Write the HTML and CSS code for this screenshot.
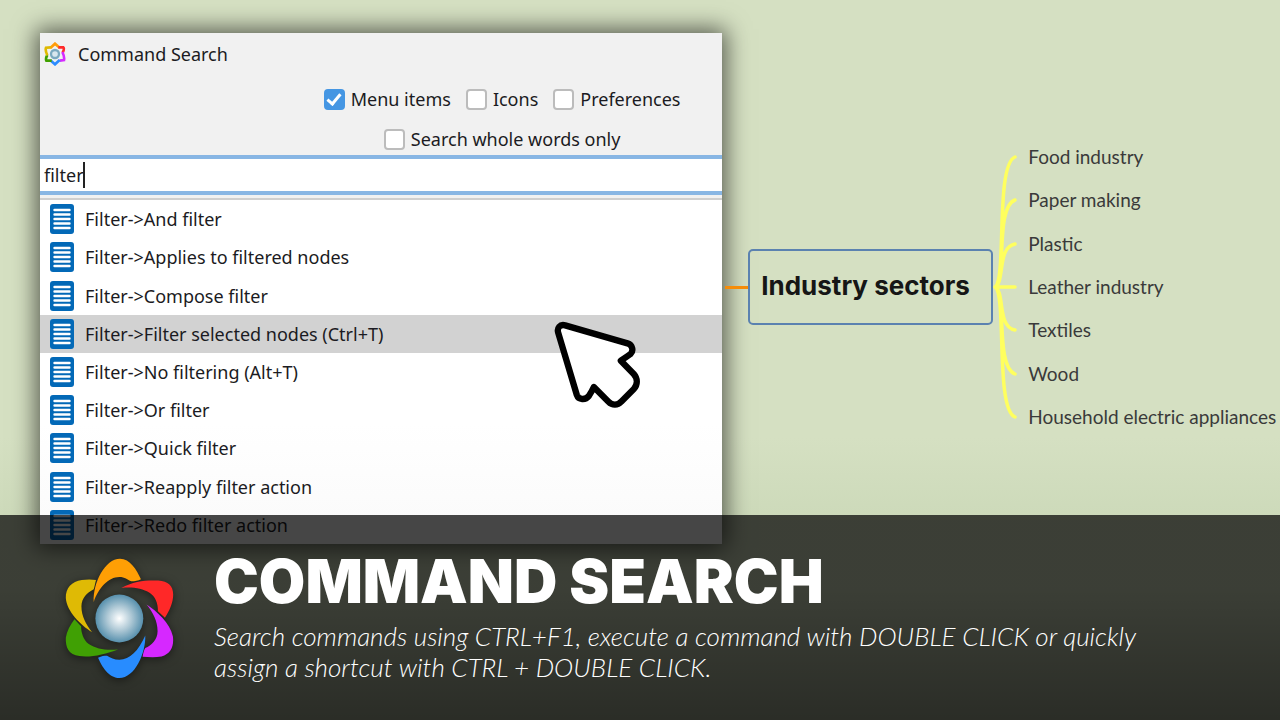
FILE: index.html
```html
<!DOCTYPE html>
<html lang="en">
<head>
<meta charset="utf-8">
<meta name="viewport" content="width=device-width, initial-scale=1">
<title>Command Search</title>
<link rel="stylesheet" href="styles.css">
</head>
<body>
<svg class="defs" aria-hidden="true">
  <symbol id="menu-icon" viewBox="0 0 24 30">
    <rect width="24" height="30" rx="3" fill="#0369b7"/>
    <path d="M4.500 6h15M4.500 10.500h15M4.500 15h15M4.500 19.500h15M4.500 24h15" stroke="#fff" stroke-width="2.400" stroke-linecap="round"/>
  </symbol>
</svg>
<main class="stage">
  <section class="dialog" aria-label="Command Search">
    <header class="titlebar">
      <svg class="app-icon" viewBox="0 0 66 72" fill="none" stroke-width="8" aria-hidden="true">
        <path d="M19 18 33 5 47 17" stroke="#ff9c0a"/>
        <path d="M43 16H58Q62 20 56 32" stroke="#ff2b2b"/>
        <path d="M55 30Q62 44 60 54L47 56" stroke="#d62bff"/>
        <path d="M47 54 33 67 19 55" stroke="#2b8cff"/>
        <path d="M23 56H7Q4 50 10 39" stroke="#40a000"/>
        <path d="M10 40Q3 25 6 17L21 16" stroke="#dfb900"/>
        <circle cx="33" cy="36" r="12" fill="#d8e6ee" stroke="#7ba9c0" stroke-width="7"/>
      </svg>
      <span>Command Search</span>
    </header>
    <form class="options">
      <div class="option-row">
        <label class="option"><input type="checkbox" checked>Menu items</label>
        <label class="option"><input type="checkbox">Icons</label>
        <label class="option"><input type="checkbox">Preferences</label>
      </div>
      <div class="option-row">
        <label class="option"><input type="checkbox">Search whole words only</label>
      </div>
    </form>
    <div class="search">
      <input class="search-input" type="text" value="filter" aria-label="Search commands">
      <span class="caret"></span>
    </div>
    <ul class="results">
      <li class="result"><svg class="result-icon"><use href="#menu-icon"/></svg>Filter-&gt;And filter</li>
      <li class="result"><svg class="result-icon"><use href="#menu-icon"/></svg>Filter-&gt;Applies to filtered nodes</li>
      <li class="result"><svg class="result-icon"><use href="#menu-icon"/></svg>Filter-&gt;Compose filter</li>
      <li class="result selected"><svg class="result-icon"><use href="#menu-icon"/></svg>Filter-&gt;Filter selected nodes (Ctrl+T)</li>
      <li class="result"><svg class="result-icon"><use href="#menu-icon"/></svg>Filter-&gt;No filtering (Alt+T)</li>
      <li class="result"><svg class="result-icon"><use href="#menu-icon"/></svg>Filter-&gt;Or filter</li>
      <li class="result"><svg class="result-icon"><use href="#menu-icon"/></svg>Filter-&gt;Quick filter</li>
      <li class="result"><svg class="result-icon"><use href="#menu-icon"/></svg>Filter-&gt;Reapply filter action</li>
      <li class="result"><svg class="result-icon"><use href="#menu-icon"/></svg>Filter-&gt;Redo filter action</li>
    </ul>
    <svg class="cursor" viewBox="102 62 260 264" aria-hidden="true">
      <path d="M114 97C110 83 119 71 135 75L322 129C337 134 341 151 331 161Q320 169 302 181L340 220C353 235 353 252 341 266L303 304C292 316 276 315 265 304L221 260Q214 275 206 287C196 300 175 299 170 284Z" fill="#fff" stroke="#000" stroke-width="19" stroke-linejoin="round"/>
    </svg>
  </section>
  <section class="map" aria-label="Mind map">
    <span class="link"></span>
    <h2 class="topic">Industry sectors</h2>
    <svg class="branches" viewBox="0 0 25 304" fill="none" stroke="#ffff5e" stroke-width="3.500" stroke-linecap="round" aria-hidden="true">
      <path d="M2 152C14 145 2 30 22 22M2 152C14 145 2 72 22 65M2 152C12 147 4 112 22 109M2 152H22M2 152C12 157 4 192 22 195M2 152C14 159 2 231 22 239M2 152C14 159 2 274 22 282"/>
    </svg>
    <ul class="topics">
      <li>Food industry</li>
      <li>Paper making</li>
      <li>Plastic</li>
      <li>Leather industry</li>
      <li>Textiles</li>
      <li>Wood</li>
      <li>Household electric appliances</li>
    </ul>
  </section>
</main>
<footer class="banner">
  <svg class="logo" viewBox="60 40 360 400" aria-hidden="true">
    <defs>
      <radialGradient id="orb"><stop offset="0" stop-color="#fff"/><stop offset=".5" stop-color="#afc9d6"/><stop offset="1" stop-color="#5790ad"/></radialGradient>
    </defs>
    <path fill="#ff9f05" d="M161 187C158 130 195 57 240 57C270 57 290 90 303 119C295 124 285 125 274 125C262 120 255 112 238 112C205 112 175 145 161 187Z"/>
    <path fill="#ff2828" d="M244 145C280 125 320 121 355 123C385 125 400 140 400 165C400 190 388 215 375 235L354 215C355 190 345 170 330 160C305 146 280 142 244 145Z"/>
    <path fill="#d628ff" d="M320 195C350 215 390 250 399 290C403 320 393 343 365 351C345 355 325 353 308 352C310 340 312 333 316 326C335 317 353 300 353 275C353 245 340 220 320 195Z"/>
    <path fill="#288cff" d="M316 288C318 340 285 416 238 416C205 416 185 380 174 355C185 350 192 349 201 349C212 355 222 361 238 361C270 360 295 335 316 288Z"/>
    <path fill="#40a004" d="M234 330C195 345 150 355 118 350C85 345 76 325 77 295C80 275 90 257 103 239L123 260C123 280 130 300 145 313C170 330 200 333 234 330Z"/>
    <path fill="#dfba05" d="M156 278C120 255 80 215 77 175C76 145 95 125 125 121Q148 119 168 121C165 130 164 140 161 149C140 160 125 175 124 200C124 230 138 255 156 278Z"/>
    <circle cx="238" cy="237" r="72" fill="url(#orb)"/>
  </svg>
  <div class="copy">
    <h1 class="headline">COMMAND SEARCH</h1>
    <p class="tagline">Search commands using CTRL+F1, execute a command with DOUBLE CLICK or quickly<br>assign a shortcut with CTRL + DOUBLE CLICK.</p>
  </div>
</footer>
</body>
</html>
```

FILE: styles.css
```css
* {
  box-sizing: border-box;
}

body {
  margin: 0;
  min-height: 100vh;
  display: flex;
  flex-direction: column;
  overflow: hidden;
  background: #d5e0c2;
  font-family: "Noto Sans", sans-serif;
}

ul,
h1,
h2,
p {
  margin: 0;
  padding: 0;
  list-style: none;
}

.defs {
  display: none;
}

.stage {
  flex: 1;
  display: flex;
  padding: 33px 0 0 40px;
  background: linear-gradient(#d5e0c2 85%, #cddaba);
}

.dialog {
  position: relative;
  flex: none;
  width: 53.3vw;
  margin-bottom: -29px;
  display: flex;
  flex-direction: column;
  background: #f1f1f1;
  box-shadow: 0 0 22px 4px rgba(0, 0, 0, 0.6);
  color: #1b1b22;
  font-size: 18px;
  line-height: 24px;
}

.titlebar {
  display: flex;
  align-items: center;
  gap: 12px;
  height: 42px;
  padding-left: 4px;
}

.app-icon {
  width: 22px;
  height: 24px;
}

.options {
  height: 80px;
  padding: 4px 0 0 242px;
}

.option-row {
  display: flex;
  justify-content: center;
  align-items: center;
  gap: 15px;
  height: 40px;
}

.option {
  display: flex;
  align-items: center;
  gap: 6px;
  white-space: nowrap;
}

.option input {
  appearance: none;
  width: 21px;
  height: 21px;
  margin: 0;
  border: 2px solid #bcbcbc;
  border-radius: 4px;
  background: #fff;
}

.option input:checked {
  border-color: #4596e3;
  background: #4596e3;
  display: grid;
  place-items: center;
}

.option input:checked::after {
  content: "";
  box-sizing: border-box;
  width: 8px;
  height: 14px;
  margin-bottom: 3px;
  border: solid #fff;
  border-width: 0 3px 3px 0;
  transform: rotate(40deg);
}

.search {
  display: flex;
  align-items: center;
  height: 40px;
  padding-left: 4px;
  background: #fff;
  border: solid #88b6e4;
  border-width: 4px 0;
}

.search-input {
  field-sizing: content;
  padding: 0;
  border: 0;
  outline: 0;
  background: none;
  color: inherit;
  font: inherit;
}

.caret {
  width: 2px;
  height: 26px;
  margin-left: -1px;
  background: #222;
}

.results {
  flex: 1;
  display: grid;
  grid-auto-rows: 1fr;
  margin-top: 3px;
  border-top: 2px solid #cfcfcf;
  background: linear-gradient(#fff 65%, #fafafa);
}

.result {
  display: flex;
  align-items: center;
  gap: 11px;
  padding-left: 10px;
}

.result.selected {
  background: #d2d2d2;
}

.result-icon {
  width: 24px;
  height: 30px;
}

.cursor {
  position: absolute;
  left: 514px;
  top: 288px;
  width: 87px;
  height: 88px;
}

.map {
  position: relative;
  display: flex;
  align-items: center;
  align-self: flex-start;
  padding: 102px 0 0 3px;
  font-family: Lato, sans-serif;
  color: #3a3a3a;
}

.link {
  width: 23px;
  height: 3px;
  background: #f68c08;
}

.topic {
  width: 245px;
  padding: 17px 0 19px 11px;
  border: 2px solid #5b82b0;
  border-radius: 5px;
  color: #161616;
  font: 700 26px/36px Inter, sans-serif;
  white-space: nowrap;
}

.branches {
  width: 25px;
  height: 304px;
}

.topics {
  display: grid;
  grid-auto-rows: 1fr;
  align-items: center;
  height: 304px;
  padding-left: 10px;
  font-size: 19px;
  line-height: 24px;
  white-space: nowrap;
}

.banner {
  position: relative;
  display: flex;
  gap: 34px;
  min-height: 205px;
  padding: 38px 60px 12px;
  background: linear-gradient(rgba(0, 0, 0, 0.72), rgba(0, 0, 0, 0.72) 35%, rgba(0, 0, 0, 0.8));
  color: #fff;
}

.logo {
  flex: none;
  width: 120px;
  height: 133px;
  filter: drop-shadow(0 2px 5px rgba(0, 0, 0, 0.5));
}

.headline {
  font: 900 60px/56px Inter, sans-serif;
}

.tagline {
  margin-top: 12px;
  font: italic 300 26px/31px Lato, sans-serif;
}
```
